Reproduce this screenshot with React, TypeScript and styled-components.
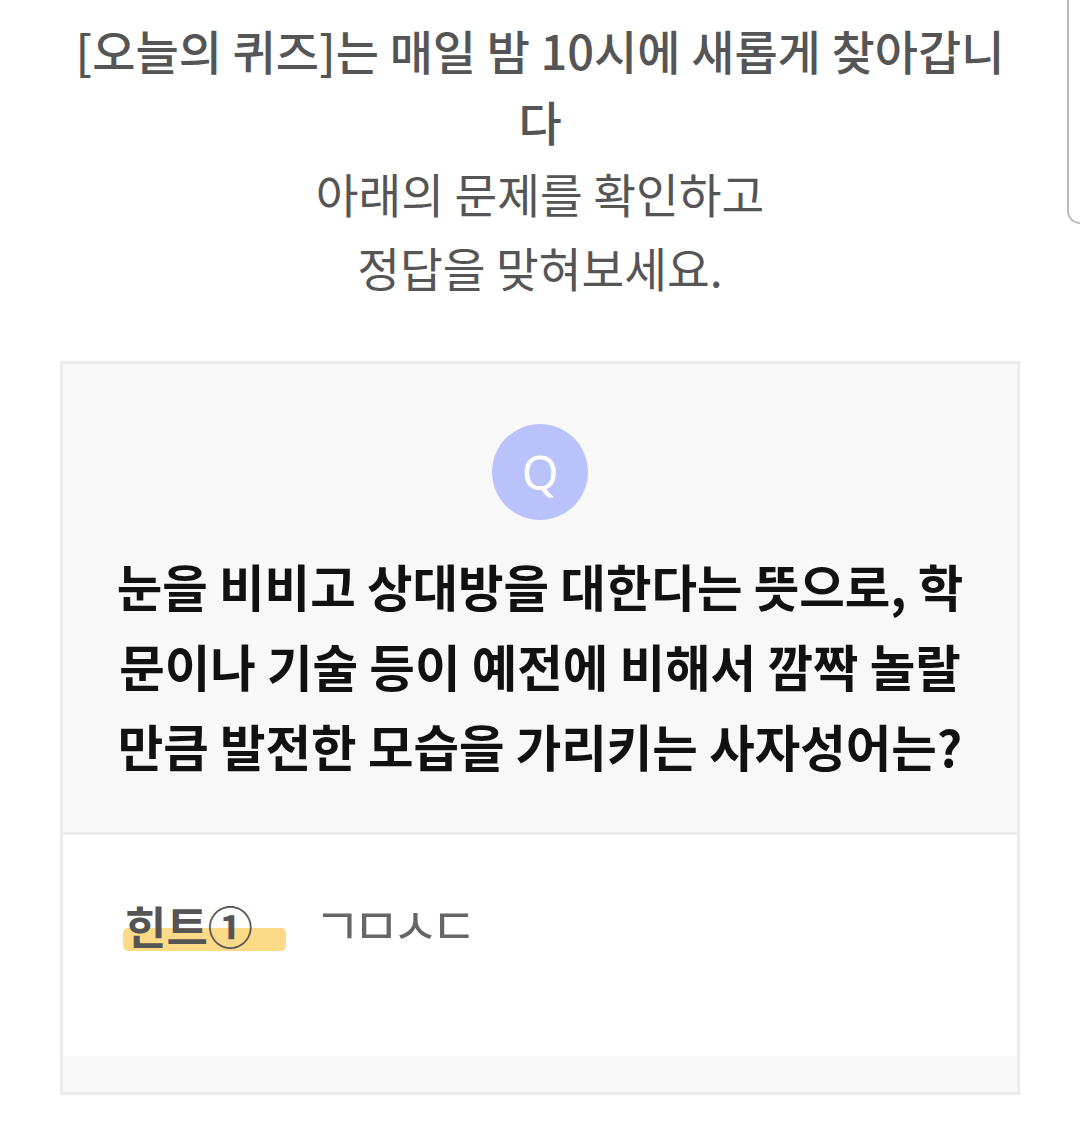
import React from "react";
import styled, { createGlobalStyle } from "styled-components";

const GlobalStyle = createGlobalStyle`
  html, body {
    margin: 0;
    padding: 0;
    background: #ffffff;
  }
  body {
    font-family: "Noto Sans CJK KR", "Noto Sans", sans-serif;
    -webkit-font-smoothing: antialiased;
  }
`;

const Page = styled.div`
  position: relative;
  width: 1080px;
  min-height: 1125px;
  box-sizing: border-box;
  padding: 14px 0 0;
  display: flex;
  flex-direction: column;
  align-items: center;
`;

const ScrollEdge = styled.div`
  position: absolute;
  top: 0;
  right: 0;
  width: 13px;
  height: 224px;
  border-left: 2px solid #bcbcbc;
  border-bottom: 2px solid #bcbcbc;
  border-bottom-left-radius: 14px;
  box-sizing: border-box;
`;

const Intro = styled.div`
  width: 940px;
  text-align: center;
  color: #555555;
`;

const IntroTitle = styled.p`
  margin: 0;
  font-size: 47px;
  line-height: 71px;
  font-weight: 500;
`;

const IntroText = styled.p`
  margin: 0;
  font-size: 46.5px;
  line-height: 74px;
  font-weight: 400;
`;

const Card = styled.section`
  margin-top: 57px;
  width: 960px;
  box-sizing: border-box;
  border: 3px solid #ebebeb;
  background: #f8f8f8;
  display: flex;
  flex-direction: column;
`;

const QuestionBlock = styled.div`
  display: flex;
  flex-direction: column;
  align-items: center;
  padding: 60px 40px 46px;
  border-bottom: 3px solid #ebebeb;
`;

const QBadge = styled.div`
  width: 96px;
  height: 96px;
  border-radius: 50%;
  background: #b9c2fb;
  color: #ffffff;
  display: flex;
  align-items: center;
  justify-content: center;
  font-family: "Noto Sans", Roboto, sans-serif;
  font-size: 47px;
  font-weight: 400;
  line-height: 1;
`;

const QuestionText = styled.p`
  margin: 26px 0 0;
  width: 866px;
  text-align: center;
  color: #111111;
  font-size: 49.5px;
  line-height: 80px;
  font-weight: 700;
`;

const HintBlock = styled.div`
  background: #ffffff;
  height: 221px;
  box-sizing: border-box;
  padding: 64px 0 0 62px;
  display: flex;
  align-items: center;
  align-content: flex-start;
  flex-wrap: wrap;
  gap: 28px;
`;

const HintLabel = styled.span`
  position: relative;
  display: inline-block;
  padding-right: 33px;
  font-size: 45px;
  line-height: 54px;
  font-weight: 700;
  color: #555555;
  z-index: 0;

  &::before {
    content: "";
    position: absolute;
    left: -2px;
    right: 0;
    top: 29px;
    height: 23px;
    border-radius: 5px;
    background: #fdda87;
    z-index: -1;
  }
`;

const HintValue = styled.span`
  font-size: 51px;
  line-height: 54px;
  font-weight: 400;
  color: #666666;
  letter-spacing: -8px;
  transform: translateY(-3px);
`;

const AnswerStrip = styled.div`
  height: 36px;
  background: #f8f8f8;
`;

export default function App() {
  return (
    <>
      <GlobalStyle />
      <Page>
        <ScrollEdge />
        <Intro>
          <IntroTitle>[오늘의 퀴즈]는 매일 밤 10시에 새롭게 찾아갑니다</IntroTitle>
          <IntroText>
            아래의 문제를 확인하고
            <br />
            정답을 맞혀보세요.
          </IntroText>
        </Intro>
        <Card>
          <QuestionBlock>
            <QBadge>Q</QBadge>
            <QuestionText>
              눈을 비비고 상대방을 대한다는 뜻으로, 학문이나 기술 등이 예전에 비해서 깜짝 놀랄 만큼 발전한 모습을 가리키는 사자성어는?
            </QuestionText>
          </QuestionBlock>
          <HintBlock>
            <HintLabel>힌트①</HintLabel>
            <HintValue>ㄱㅁㅅㄷ</HintValue>
          </HintBlock>
          <AnswerStrip />
        </Card>
      </Page>
    </>
  );
}
